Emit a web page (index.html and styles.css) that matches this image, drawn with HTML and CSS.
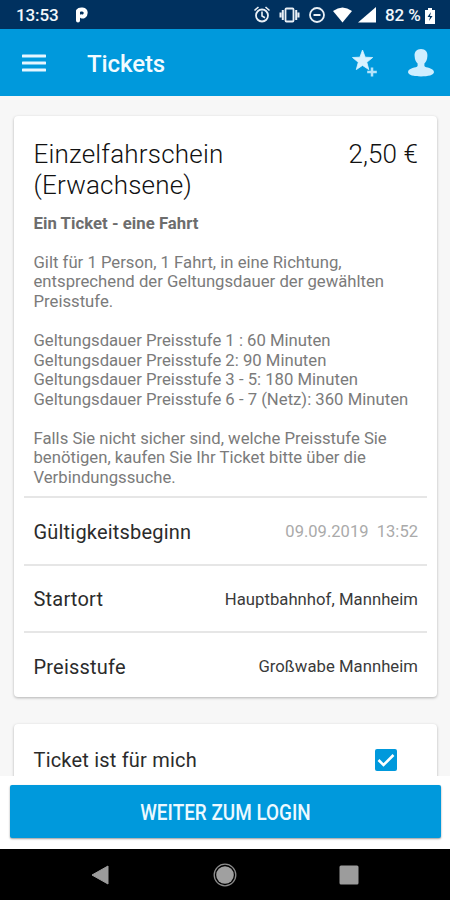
FILE: index.html
```html
<!DOCTYPE html>
<html lang="de">
<head>
<meta charset="utf-8">
<title>Tickets</title>
<link rel="stylesheet" href="styles.css">
</head>
<body>
<div class="screen">
  <div class="status">
    <span class="clock">13:53</span>
    <svg class="park" width="14" height="18" viewBox="0 0 14 18"><path d="M3 14.500V5C4.500 2.800 10.700 2.800 10.700 6.800C10.700 10 8 10.800 6.500 10.300" fill="none" stroke="#fff" stroke-width="4" stroke-linecap="round"/></svg>
    <svg class="tray" width="126" height="20" viewBox="0 0 126 20" fill="none" stroke="#e9f0f6" stroke-width="1.800">
      <circle cx="9" cy="10.500" r="6"/><path d="M9 6.500v4.500l3 1.800M1.500 5.500l4-3.500M16.500 5.500l-4-3.500" stroke-width="1.600"/>
      <rect x="32.500" y="3.500" width="8" height="13" rx="1"/><path d="M29.800 5v10M27.500 7.500v5M43.200 5v10M45.500 7.500v5" stroke-width="2"/>
      <circle cx="64" cy="10" r="7"/><path d="M60.500 10h7" stroke-width="2"/>
      <path d="M80 6Q89.500-1 99 6L89.500 17.500z" fill="#fff" stroke="none"/>
      <path d="M105 17.500L123 2V17.500z" fill="#fff" stroke="none"/>
    </svg>
    <span class="charge">82 %</span>
    <svg class="battery" width="10" height="16" viewBox="0 0 10 16"><path d="M3 0h4v2h3v14H0V2h3z" fill="#fff"/><path d="M6 4L2.500 9H5l-1 4 3.500-5H5z" fill="#00315f"/></svg>
  </div>
  <header class="bar">
    <svg class="menu" width="24" height="18" viewBox="0 0 24 18"><path d="M1 2h22M1 9h22M1 16h22" stroke="#e5f6ff" stroke-width="3" stroke-linecap="round"/></svg>
    <h1>Tickets</h1>
    <svg class="star" width="26" height="30" viewBox="0 0 26 30"><path d="M10.500 1l2.700 7.200 7.500.3-5.900 4.800 2 7.300-6.300-4.200-6.200 4.200 2-7.300L.5 8.500l7.400-.3z" fill="#d8f2ff" stroke="#d8f2ff" stroke-width=".8"/><path d="M20 18.500v9M15.200 23h9.600" stroke="#b5e3fa" stroke-width="2.500"/></svg>
    <svg class="person" width="28" height="28" viewBox="0 0 28 28"><path d="M14 0c4.500 0 6.700 3 6.400 7-.2 4-1.500 6-3 7.500v2.600c1 2 9.100 1.500 9.600 6 0 3.200-6 4.400-13 4.400S1 26.300 1 23.100c.5-4.500 8.600-4 9.600-6v-2.600c-1.500-1.500-2.800-3.500-3-7.500C7.300 3 9.500 0 14 0z" fill="#cfeeff"/></svg>
  </header>
  <main>
    <section class="card">
      <div class="head">
        <h2>Einzelfahrschein<br>(Erwachsene)</h2>
        <span class="price">2,50 €</span>
      </div>
      <div class="info">
        <p><b>Ein Ticket - eine Fahrt</b></p>
        <p>Gilt für 1 Person, 1 Fahrt, in eine Richtung,<br>entsprechend der Geltungsdauer der gewählten<br>Preisstufe.</p>
        <p>Geltungsdauer Preisstufe 1 : 60 Minuten<br>Geltungsdauer Preisstufe 2: 90 Minuten<br>Geltungsdauer Preisstufe 3 - 5: 180 Minuten<br>Geltungsdauer Preisstufe 6 - 7 (Netz): 360 Minuten</p>
        <p>Falls Sie nicht sicher sind, welche Preisstufe Sie<br>benötigen, kaufen Sie Ihr Ticket bitte über die<br>Verbindungssuche.</p>
      </div>
      <div class="row"><span class="label">Gültigkeitsbeginn</span><span class="value date">09.09.2019&nbsp; 13:52</span></div>
      <div class="row"><span class="label">Startort</span><span class="value">Hauptbahnhof, Mannheim</span></div>
      <div class="row"><span class="label">Preisstufe</span><span class="value">Großwabe Mannheim</span></div>
    </section>
    <section class="card second">
      <span class="label">Ticket ist für mich</span>
      <svg class="check" width="22" height="22" viewBox="0 0 22 22"><rect width="22" height="22" rx="2" fill="#0099dc"/><path d="M3.500 11l5 5L18.500 6" fill="none" stroke="#fff" stroke-width="2.600"/></svg>
    </section>
  </main>
  <div class="action"><button><span>WEITER ZUM LOGIN</span></button></div>
  <nav>
    <svg width="20" height="22" viewBox="0 0 20 22"><path d="M18 2v18L2 11z" fill="#9c9c9c" stroke="#9c9c9c" stroke-linejoin="round"/></svg>
    <svg width="24" height="24" viewBox="0 0 24 24"><circle cx="12" cy="12" r="10.800" fill="none" stroke="#8c8c8c" stroke-width="1.300"/><circle cx="12" cy="12" r="8.800" fill="#a0a0a0"/></svg>
    <svg width="20" height="20" viewBox="0 0 20 20"><rect x=".5" y=".5" width="19" height="19" rx="1.500" fill="#9c9c9c"/></svg>
  </nav>
</div>
</body>
</html>
```
FILE: styles.css
```css
* { box-sizing: border-box; }
body { margin: 0; font-family: Roboto, sans-serif; background: #f7f7f7; }
.screen { width: 450px; height: 900px; display: flex; flex-direction: column; overflow: hidden; white-space: nowrap; }
svg { display: block; flex: none; }
h1, h2, p { margin: 0; }
.status { height: 29px; flex: none; background: #00315f; color: #f2f7fb; display: flex; align-items: center; padding: 1px 15px 0 16px; font-size: 17px; font-weight: 500; }
.clock { width: 59px; letter-spacing: -.1px; }
.tray { margin: 0 6px 0 auto; }
.charge { width: 40px; letter-spacing: -.1px; }
.battery { margin-top: 2px; }
.bar { height: 67px; flex: none; background: #0099dc; display: flex; align-items: center; padding: 2px 15px 0 22px; color: #f2fbff; }
.menu { margin-top: -2px; }
h1 { margin-left: 41px; font-size: 24px; font-weight: 500; line-height: 28px; letter-spacing: -.1px; }
.star { margin-left: auto; }
.person { margin-left: 29px; margin-top: -1px; }
main { height: 680px; flex: none; padding: 20px 13px 0 14px; overflow: hidden; }
.card { background: #fff; border-radius: 4px; box-shadow: 0 1px 3px rgba(0, 0, 0, .28); height: 581px; padding: 23px 10px 0; }
.head { display: flex; justify-content: space-between; padding: 0 9px 0 9.500px; font-size: 26px; line-height: 30.500px; color: #111; font-weight: 350; }
h2 { font: inherit; letter-spacing: .2px; }
.price { letter-spacing: .1px; }
.info { height: 280px; margin-top: 13px; padding: .5px 9.500px 0; font-size: 16.700px; line-height: 19.580px; color: #7b7b7b; }
.info p + p { margin-top: 19.580px; }
.info b { color: #6d6d6d; letter-spacing: .05px; }
.row { height: 67.500px; border-top: 2px solid #e6e6e6; padding: 2px 9px 0 9.500px; display: flex; align-items: center; justify-content: space-between; }
.info + .row { margin-top: 3px; }
.label { font-size: 20px; color: #2b2b2b; letter-spacing: .2px; }
.value { font-size: 16.700px; color: #3a3a3a; letter-spacing: .03px; }
.date { color: #aaa; font-size: 16.500px; }
.second { margin-top: 27px; height: 80px; padding: 0 40px 8px 19.500px; display: flex; align-items: center; justify-content: space-between; }
.action { height: 73px; flex: none; background: #fff; padding: 9px 9px 0 10px; }
button { display: block; width: 431px; height: 53px; border: 0; border-radius: 2px; background: #0099dc; color: #edf9ff; font: 500 22.500px/55px Roboto, sans-serif; padding: 0; box-shadow: 0 1px 2px rgba(0, 0, 0, .4); }
button span { display: inline-block; transform: scaleX(.84); }
nav { height: 51px; flex: none; background: #000; display: flex; align-items: center; justify-content: space-between; padding: 0 91px 0 90px; }
```
